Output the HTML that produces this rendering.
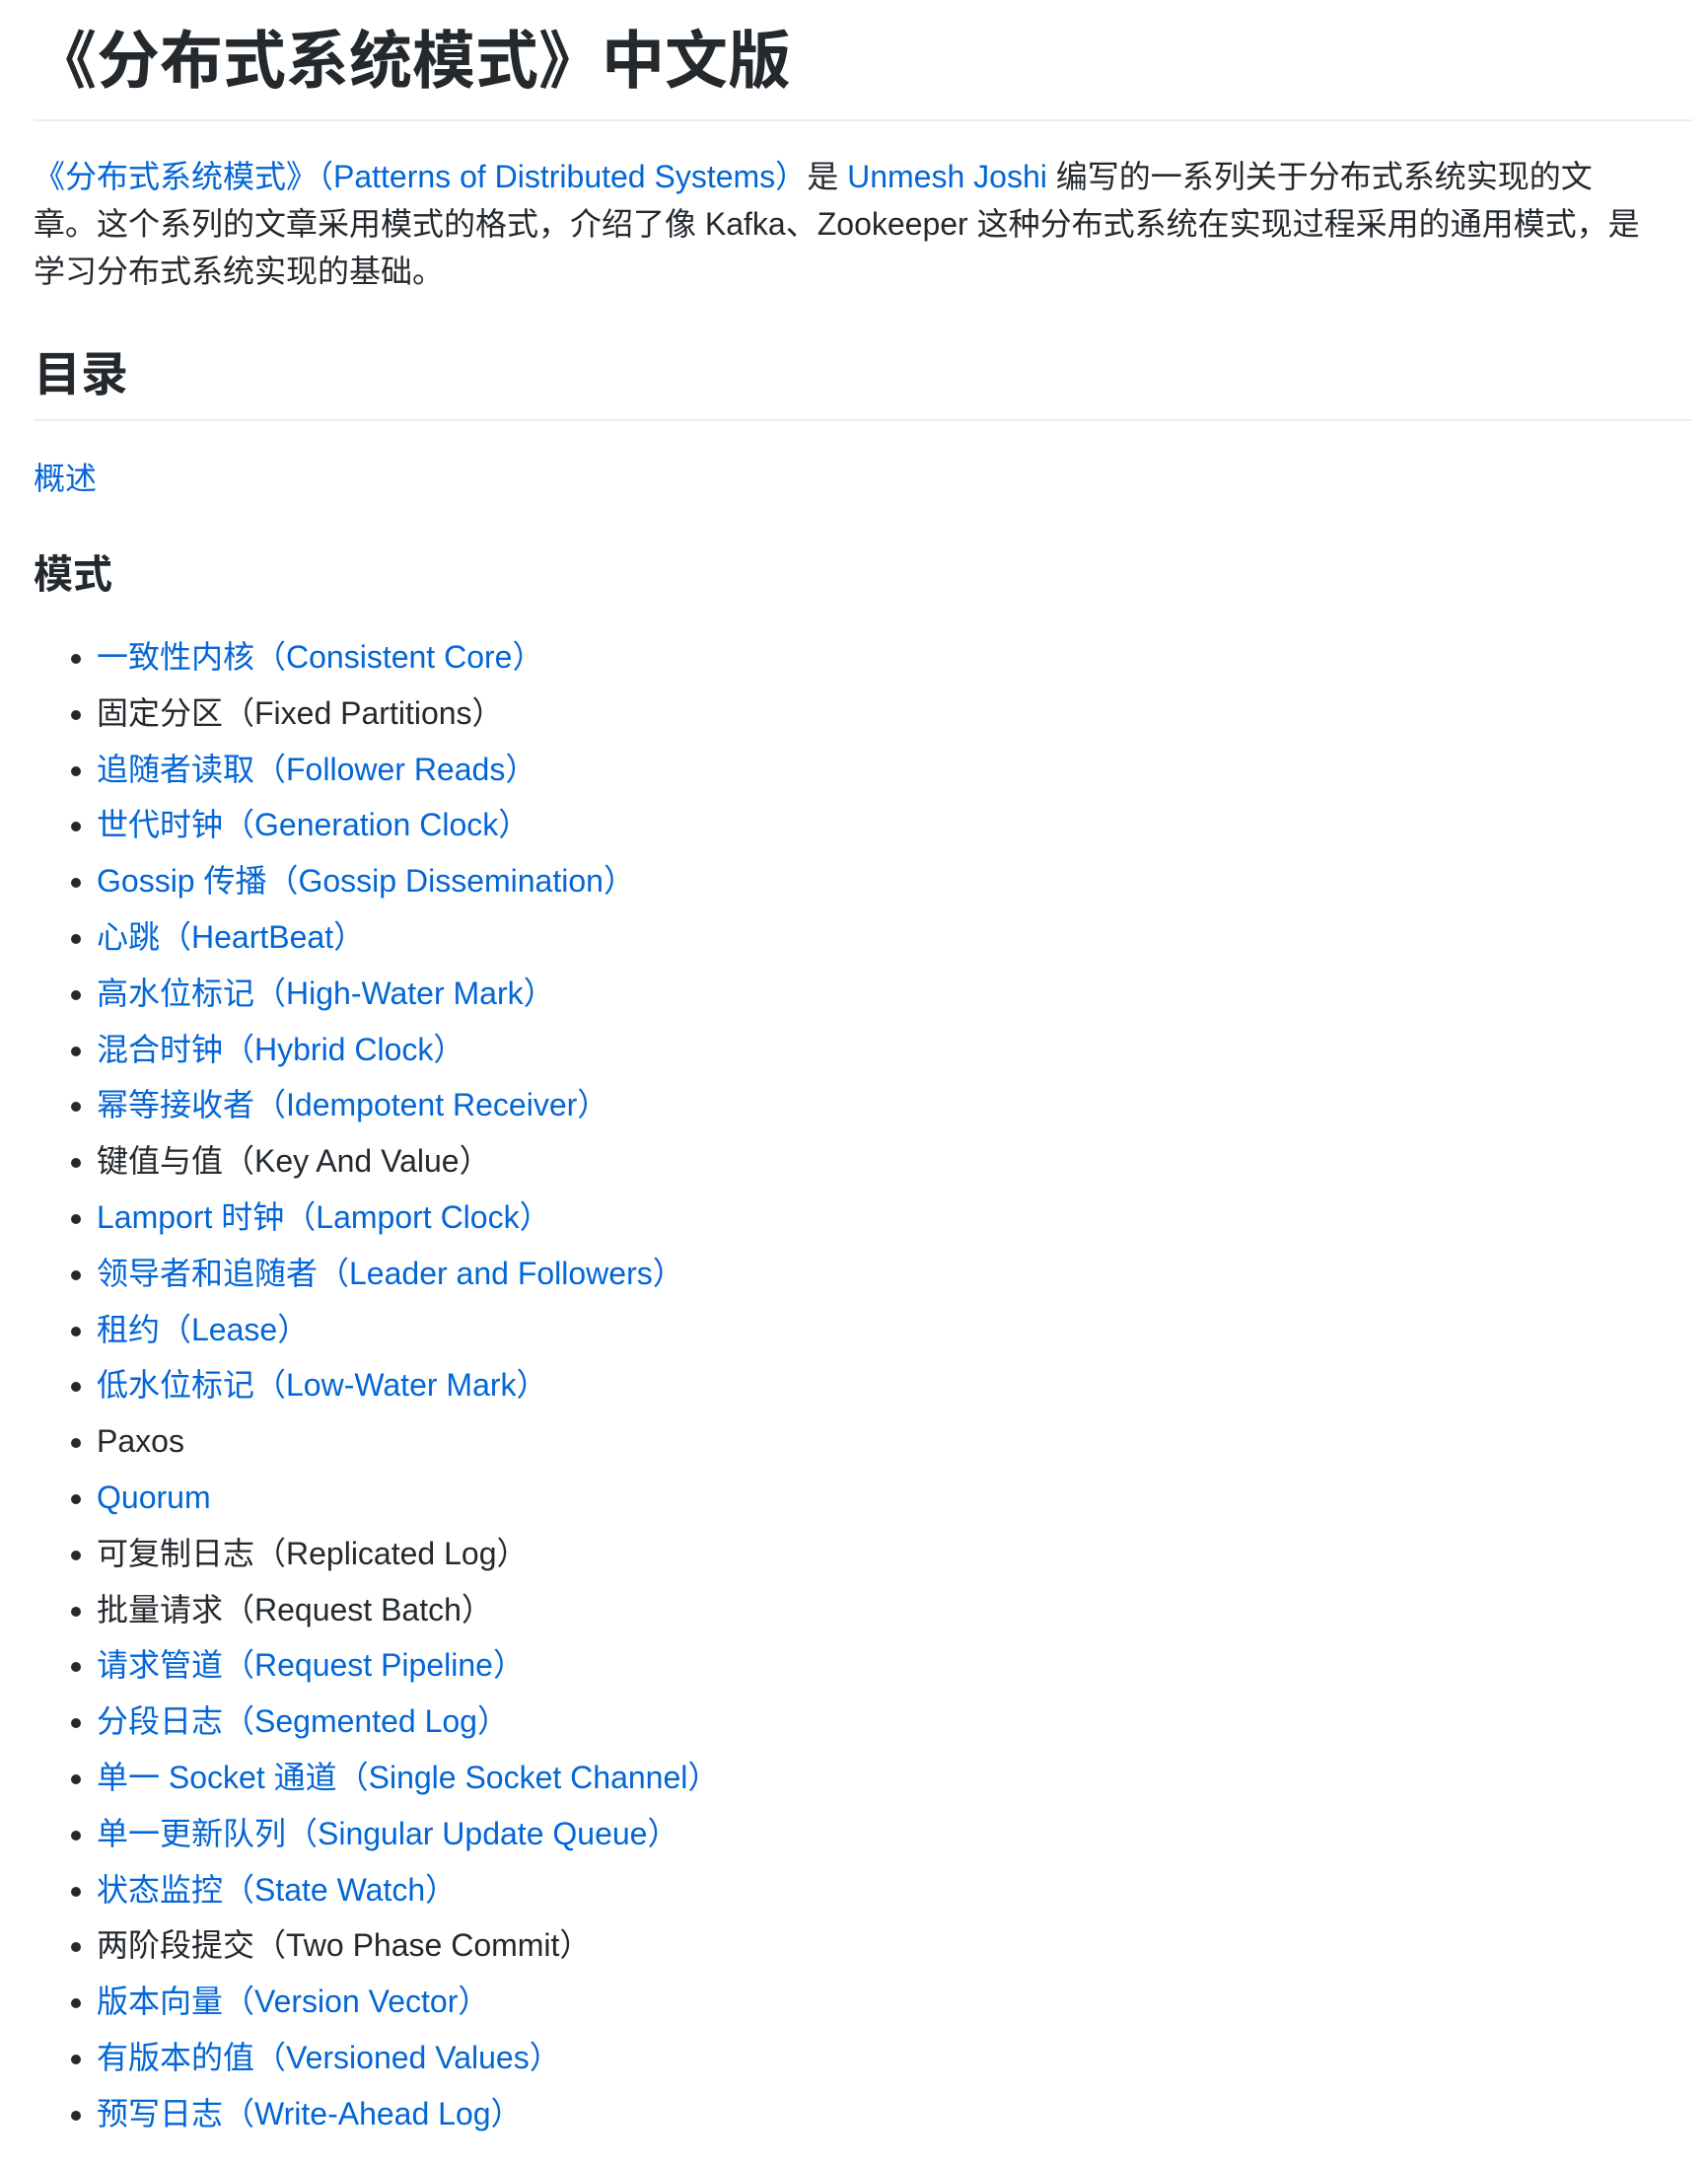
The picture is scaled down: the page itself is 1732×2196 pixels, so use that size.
<!DOCTYPE html>
<html><head><meta charset="utf-8"><style>
html{zoom:2}
body{margin:0;background:#fff;width:866px;height:1087px;overflow:hidden}
.md{padding:0 8px 0 17px;color:#24292e;font-family:"Liberation Sans","Noto Sans CJK SC",sans-serif;font-size:16px;line-height:24px}
a{color:#0366d6;text-decoration:none}
h1{font-size:32px;line-height:40px;margin:11px 0 0;padding-bottom:9.5px;border-bottom:1px solid #eaecef;font-weight:700}
p{margin:16px 0 0;white-space:nowrap}
h2{font-size:24px;line-height:30px;margin:26px 0 0;padding-bottom:7px;border-bottom:1px solid #eaecef;font-weight:700}
h2+p{margin-top:17px}
h3{font-size:20px;line-height:25px;margin:24.5px 0 0;font-weight:700}
ul{margin:17px 0 0;padding-left:32px}
li{line-height:24.4px;height:24.4px;margin-top:4px}
li:first-child{margin-top:0}
</style></head><body><div class="md">
<h1>《分布式系统模式》中文版</h1>
<p><a>《分布式系统模式》（Patterns of Distributed Systems）</a>是 <a>Unmesh Joshi</a> 编写的一系列关于分布式系统实现的文<br>章。这个系列的文章采用模式的格式，介绍了像 Kafka、Zookeeper 这种分布式系统在实现过程采用的通用模式，是<br>学习分布式系统实现的基础。</p>
<h2>目录</h2>
<p><a>概述</a></p>
<h3>模式</h3>
<ul>
<li><a>一致性内核（Consistent Core）</a></li>
<li>固定分区（Fixed Partitions）</li>
<li><a>追随者读取（Follower Reads）</a></li>
<li><a>世代时钟（Generation Clock）</a></li>
<li><a>Gossip 传播（Gossip Dissemination）</a></li>
<li><a>心跳（HeartBeat）</a></li>
<li><a>高水位标记（High-Water Mark）</a></li>
<li><a>混合时钟（Hybrid Clock）</a></li>
<li><a>幂等接收者（Idempotent Receiver）</a></li>
<li>键值与值（Key And Value）</li>
<li><a>Lamport 时钟（Lamport Clock）</a></li>
<li><a>领导者和追随者（Leader and Followers）</a></li>
<li><a>租约（Lease）</a></li>
<li><a>低水位标记（Low-Water Mark）</a></li>
<li>Paxos</li>
<li><a>Quorum</a></li>
<li>可复制日志（Replicated Log）</li>
<li>批量请求（Request Batch）</li>
<li><a>请求管道（Request Pipeline）</a></li>
<li><a>分段日志（Segmented Log）</a></li>
<li><a>单一 Socket 通道（Single Socket Channel）</a></li>
<li><a>单一更新队列（Singular Update Queue）</a></li>
<li><a>状态监控（State Watch）</a></li>
<li>两阶段提交（Two Phase Commit）</li>
<li><a>版本向量（Version Vector）</a></li>
<li><a>有版本的值（Versioned Values）</a></li>
<li><a>预写日志（Write-Ahead Log）</a></li>
</ul>
</div></body></html>
